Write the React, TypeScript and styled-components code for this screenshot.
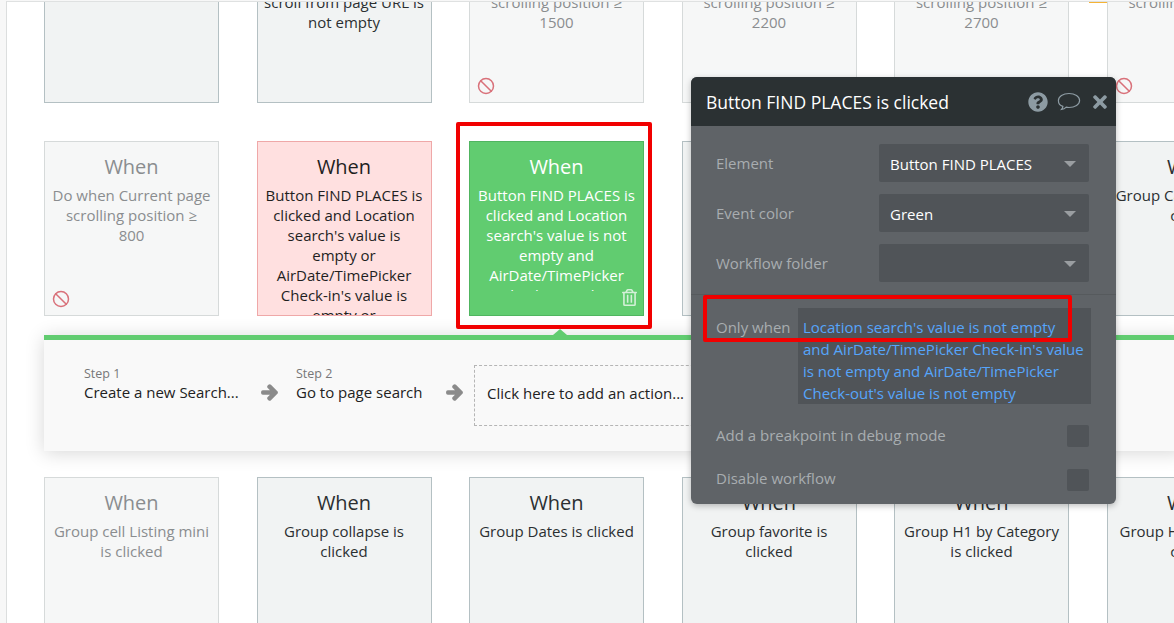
import React from "react";
import styled, { createGlobalStyle } from "styled-components";
import { Ban } from "lucide-react";
import { FaArrowRight, FaQuestionCircle, FaTimes, FaRegTrashAlt } from "react-icons/fa";

const Global = createGlobalStyle`
  html, body { margin: 0; padding: 0; background: #fff; overflow: hidden; }
  body { font-family: "Open Sans", "Liberation Sans", sans-serif; }
`;

const Page = styled.div`
  position: relative;
  width: 1174px;
  height: 623px;
  overflow: hidden;
  background: #f7f7f7;
  padding: 1px 0 0 6px;
  box-sizing: border-box;
`;

const Canvas = styled.div`
  position: relative;
  height: 622px;
  width: 1168px;
  background: #fff;
  border-left: 1px solid #dcdede;
  border-top: 1px solid #dfe1e1;
  box-sizing: border-box;
  padding-left: 37px;
  overflow: hidden;
`;

const TopAccent = styled.div`
  position: absolute;
  top: -1px;
  left: 1082px;
  width: 40px;
  height: 2px;
  background: #f5b335;
`;

const Row = styled.div<{ $top: number }>`
  display: grid;
  grid-template-columns: repeat(6, 175px);
  column-gap: 37.5px;
  margin-top: ${(p) => p.$top}px;
`;

const palette = {
  normal: { bg: "#f1f3f3", border: "#b4c0c3", color: "#2b2f31" },
  muted: { bg: "#f6f7f7", border: "#d6dada", color: "#8a8d8f" },
  error: { bg: "#ffe0e0", border: "#efa8a8", color: "#1f1f1f" },
  active: { bg: "#61cc70", border: "#50b560", color: "#ffffff" },
};
type Tone = keyof typeof palette;

const Card = styled.div<{ $tone: Tone }>`
  position: relative;
  width: 175px;
  height: 175px;
  box-sizing: border-box;
  padding: 12px 0 0;
  overflow: hidden;
  text-align: center;
  background: ${(p) => palette[p.$tone].bg};
  border: 1px solid ${(p) => palette[p.$tone].border};
  color: ${(p) => palette[p.$tone].color};
`;

const When = styled.div`
  font-size: 20px;
  line-height: 26px;
`;

const CardText = styled.div`
  font-size: 15px;
  line-height: 20px;
  margin-top: 5px;
  white-space: pre;
`;

const CardFooter = styled.div`
  position: absolute;
  left: 0;
  right: 0;
  bottom: 0;
  height: 24px;
  background: #61cc70;
`;

const TrashIcon = styled(FaRegTrashAlt)`
  position: absolute;
  right: 6px;
  bottom: 9px;
  width: 15px;
  height: 17px;
  color: #d4f0d8;
`;

const BanIcon = styled(Ban)`
  position: absolute;
  left: 7px;
  bottom: 7px;
  color: #d9717a;
`;

const Panel = styled.div`
  position: relative;
  margin: 19px 0 26px;
  width: 1140px;
  height: 116px;
  box-sizing: border-box;
  background: #f9f9f9;
  border-top: 5px solid #61cc70;
  box-shadow: 0 2px 18px rgba(0, 0, 0, 0.16);
  display: flex;
  align-items: flex-start;
  padding: 26px 0 0 40px;
`;

const Pointer = styled.div`
  position: absolute;
  left: 509px;
  top: -11px;
  width: 0;
  height: 0;
  border-left: 7px solid transparent;
  border-right: 7px solid transparent;
  border-bottom: 6px solid #61cc70;
`;

const Step = styled.div<{ $w: number }>`
  width: ${(p) => p.$w}px;
  flex: none;
`;

const StepLabel = styled.div`
  font-size: 12.5px;
  line-height: 15px;
  color: #777;
`;

const StepName = styled.div`
  font-size: 15px;
  line-height: 22px;
  color: #222;
  white-space: nowrap;
`;

const StepArrow = styled(FaArrowRight)`
  flex: none;
  width: 17px;
  height: 17px;
  margin: 18px 18px 0 0;
  color: #8b8b8b;
  stroke: #8b8b8b;
  stroke-width: 60px;
`;

const AddAction = styled.div`
  flex: none;
  margin-top: -1px;
  margin-left: -7px;
  width: 240px;
  height: 61px;
  box-sizing: border-box;
  border: 1px dashed #b5b5b5;
  padding: 0 0 5px 12px;
  display: flex;
  align-items: center;
  font-size: 15px;
  color: #222;
  white-space: nowrap;
`;

const Popup = styled.div`
  position: absolute;
  left: 691px;
  top: 77px;
  width: 425px;
  height: 427px;
  border-radius: 6px;
  overflow: hidden;
  background: #5f6367;
  box-shadow: 0 2px 6px rgba(0, 0, 0, 0.25);
  z-index: 2;
`;

const PopupHeader = styled.div`
  height: 49px;
  background: #2b3133;
  display: flex;
  align-items: center;
  padding: 0 6px 0 15px;
  color: #fff;
  font-size: 17.5px;
`;

const PopupTitle = styled.div`
  flex: 1;
`;

const HeaderIcons = styled.div`
  display: flex;
  align-items: center;
  gap: 9px;
  color: #8d9ba3;
`;

const Fields = styled.div`
  padding: 18px 27px 0 25px;
  display: flex;
  flex-direction: column;
  gap: 12px;
  height: 169px;
  box-sizing: border-box;
  border-bottom: 1px solid #565a5d;
`;

const FieldRow = styled.div`
  display: flex;
  align-items: center;
  justify-content: space-between;
  height: 38px;
`;

const Label = styled.div`
  font-size: 15px;
  color: #a8adb0;
`;

const CheckLabel = styled(Label)<{ $lift: number }>`
  padding-bottom: ${(p) => p.$lift}px;
`;

const Select = styled.div`
  width: 210px;
  height: 38px;
  box-sizing: border-box;
  background: #505458;
  border-radius: 2px;
  padding: 1px 13px 0 11px;
  display: flex;
  align-items: center;
  justify-content: space-between;
  color: #fff;
  font-size: 15px;
`;

const Caret = styled.div`
  width: 0;
  height: 0;
  border-left: 6px solid transparent;
  border-right: 6px solid transparent;
  border-top: 6px solid #9a9ea1;
`;

const WhenRow = styled.div`
  display: flex;
  align-items: flex-start;
  padding: 13px 25px 0 25px;
`;

const WhenLabel = styled(Label)`
  width: 82px;
  flex: none;
  margin-top: 9px;
`;

const Expression = styled.div`
  width: 293px;
  flex: none;
  height: 96px;
  box-sizing: border-box;
  background: #505458;
  padding: 8px 0 0 5px;
  color: #56a5fb;
  font-size: 15px;
  line-height: 22px;
  white-space: pre;
`;

const CheckRow = styled.div<{ $top: number }>`
  display: flex;
  align-items: center;
  justify-content: space-between;
  height: 22px;
  margin-top: ${(p) => p.$top}px;
  padding: 0 27px 0 25px;
`;

const Check = styled.div`
  width: 22px;
  height: 22px;
  border-radius: 2px;
  background: #505458;
`;

const Highlight = styled.div<{ $x: number; $y: number; $w: number; $h: number }>`
  position: absolute;
  left: ${(p) => p.$x}px;
  top: ${(p) => p.$y}px;
  width: ${(p) => p.$w}px;
  height: ${(p) => p.$h}px;
  box-sizing: border-box;
  border: 4px solid #f10000;
  border-radius: 2px;
  z-index: 3;
`;

type C = { t: Tone; text: string; ban?: boolean };

const row1: C[] = [
  { t: "normal", text: "" },
  { t: "normal", text: "Do when\nscroll from page URL is\nnot empty" },
  { t: "muted", text: "Do when Current page\nscrolling position \u2265\n1500", ban: true },
  { t: "muted", text: "Do when Current page\nscrolling position \u2265\n2200" },
  { t: "muted", text: "Do when Current page\nscrolling position \u2265\n2700" },
  { t: "muted", text: "Do when Current page\nscrolling position \u2265\n3200", ban: true },
];

const row2: C[] = [
  { t: "muted", text: "Do when Current page\nscrolling position \u2265\n800", ban: true },
  {
    t: "error",
    text: "Button FIND PLACES is\nclicked and Location\nsearch's value is\nempty or\nAirDate/TimePicker\nCheck-in's value is\nempty or",
  },
  {
    t: "active",
    text: "Button FIND PLACES is\nclicked and Location\nsearch's value is not\nempty and\nAirDate/TimePicker\nCheck-in's value",
  },
  { t: "normal", text: "Group is clicked" },
  { t: "normal", text: "Group is clicked" },
  { t: "normal", text: "Group Category lists is\nclicked" },
];

const row3: C[] = [
  { t: "muted", text: "Group cell Listing mini\nis clicked" },
  { t: "normal", text: "Group collapse is\nclicked" },
  { t: "normal", text: "Group Dates is clicked" },
  { t: "normal", text: "Group favorite is\nclicked" },
  { t: "normal", text: "Group H1 by Category\nis clicked" },
  { t: "normal", text: "Group H1 by Prices is\nclicked" },
];

const Cards = ({ items, top }: { items: C[]; top: number }) => (
  <Row $top={top}>
    {items.map((c, i) => (
      <Card key={i} $tone={c.t}>
        <When>When</When>
        <CardText>{c.text}</CardText>
        {c.t === "active" && (
          <CardFooter>
            <TrashIcon />
          </CardFooter>
        )}
        {c.ban && <BanIcon size={18} strokeWidth={2} />}
      </Card>
    ))}
  </Row>
);

const Bubble = () => (
  <svg width="24" height="22" viewBox="0 0 24 22" fill="none" stroke="#8d9ba3" strokeWidth="1.2">
    <path d="M12 2.5c6 0 10.6 3 10.6 7s-4.6 7-10.6 7c-1 0-1.9-.1-2.8-.3-1.2 1.3-2.800 2.100-4.700 2.300.8-.9 1.300-1.900 1.400-3.100C3.200 14.700 1.400 12.300 1.400 9.500c0-4 4.600-7 10.600-7z" />
  </svg>
);

export default function App() {
  return (
    <Page>
      <Global />
      <Canvas>
        <TopAccent />
        <Cards items={row1} top={-74} />
        <Cards items={row2} top={38} />
        <Panel>
          <Pointer />
          <Step $w={177}>
            <StepLabel>Step 1</StepLabel>
            <StepName>Create a new Search...</StepName>
          </Step>
          <StepArrow />
          <Step $w={150}>
            <StepLabel>Step 2</StepLabel>
            <StepName>Go to page search</StepName>
          </Step>
          <StepArrow />
          <AddAction>Click here to add an action...</AddAction>
        </Panel>
        <Cards items={row3} top={0} />
      </Canvas>
      <Highlight $x={456} $y={122} $w={196} $h={207} />
      <Popup>
        <PopupHeader>
          <PopupTitle>Button FIND PLACES is clicked</PopupTitle>
          <HeaderIcons>
            <FaQuestionCircle size={20} />
            <Bubble />
            <FaTimes size={20} />
          </HeaderIcons>
        </PopupHeader>
        <Fields>
          <FieldRow>
            <Label>Element</Label>
            <Select>
              Button FIND PLACES
              <Caret />
            </Select>
          </FieldRow>
          <FieldRow>
            <Label>Event color</Label>
            <Select>
              Green
              <Caret />
            </Select>
          </FieldRow>
          <FieldRow>
            <Label>Workflow folder</Label>
            <Select>
              <span />
              <Caret />
            </Select>
          </FieldRow>
        </Fields>
        <WhenRow>
          <WhenLabel>Only when</WhenLabel>
          <Expression>
            {"Location search's value is not empty\nand AirDate/TimePicker Check-in's value\nis not empty and AirDate/TimePicker\nCheck-out's value is not empty"}
          </Expression>
        </WhenRow>
        <CheckRow $top={21}>
          <CheckLabel $lift={2}>Add a breakpoint in debug mode</CheckLabel>
          <Check />
        </CheckRow>
        <CheckRow $top={22}>
          <CheckLabel $lift={4}>Disable workflow</CheckLabel>
          <Check />
        </CheckRow>
      </Popup>
      <Highlight $x={703} $y={295} $w={369} $h={47} />
    </Page>
  );
}
